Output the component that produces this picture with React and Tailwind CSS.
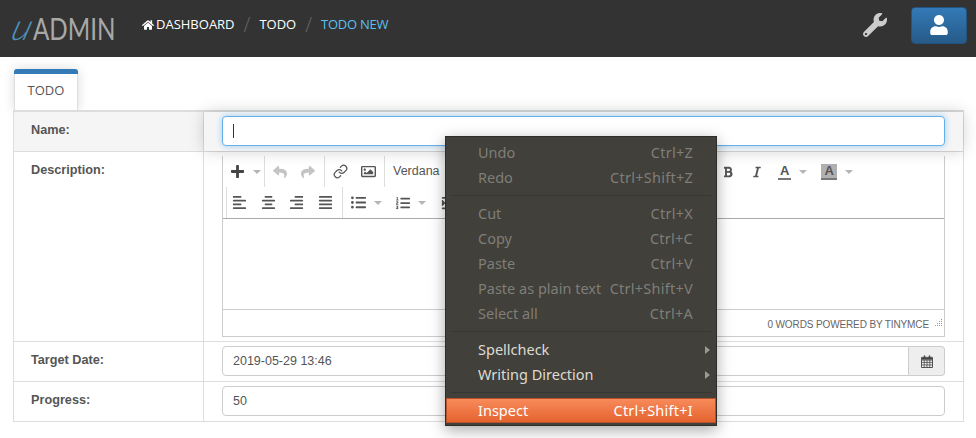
import React from "react";
import {
  FaHome,
  FaWrench,
  FaUser,
  FaPlus,
  FaReply,
  FaShare,
  FaRegImage,
  FaAlignLeft,
  FaAlignCenter,
  FaAlignRight,
  FaAlignJustify,
  FaListUl,
  FaListOl,
  FaIndent,
  FaBold,
  FaItalic,
} from "react-icons/fa";
import { Link } from "lucide-react";

const menuItems = [
  { label: "Undo", keys: "Ctrl+Z" },
  { label: "Redo", keys: "Ctrl+Shift+Z" },
  { sep: true },
  { label: "Cut", keys: "Ctrl+X" },
  { label: "Copy", keys: "Ctrl+C" },
  { label: "Paste", keys: "Ctrl+V" },
  { label: "Paste as plain text", keys: "Ctrl+Shift+V" },
  { label: "Select all", keys: "Ctrl+A" },
  { sep: true },
  { label: "Spellcheck", sub: true, enabled: true },
  { label: "Writing Direction", sub: true, enabled: true },
  { sep: true },
  { label: "Inspect", keys: "Ctrl+Shift+I", active: true },
];

function Caret() {
  return <span className="ml-[8px] h-0 w-0 border-x-[4px] border-t-[4px] border-x-transparent border-t-[#b5b5b5]" />;
}

function Row({ label, children, className = "" }) {
  return (
    <div className={`grid grid-cols-[190px_1fr] border-b border-[#ddd] ${className}`}>
      <div className="border-r border-[#ddd] pl-[17px] pt-[9px] text-[12.7px] font-bold text-[#555]">{label}</div>
      {children}
    </div>
  );
}

function CalendarIcon() {
  return (
    <svg width="12" height="13" viewBox="0 0 13 14" className="text-[#444]">
      <path d="M0.5 2.5h12v11h-12z" fill="none" stroke="currentColor" />
      <path d="M0.5 5.5h12M0.5 8h12M0.5 10.7h12M3.5 5v8M6.5 5v8M9.5 5v8" fill="none" stroke="currentColor" strokeWidth="0.8" />
      <path d="M1 3h11v2H1z" fill="currentColor" />
      <path d="M3 0.5h1.6v3H3zM8.4 0.5H10v3H8.4z" fill="currentColor" />
    </svg>
  );
}

function ResizeGrip() {
  return (
    <svg width="9" height="9" viewBox="0 0 9 9" className="ml-[5px] mt-[8px] text-[#999]">
      <path d="M7 1h1v1H7zM5 3h1v1H5zM7 3h1v1H7zM3 5h1v1H3zM5 5h1v1H5zM7 5h1v1H7zM1 7h1v1H1zM3 7h1v1H3zM5 7h1v1H5zM7 7h1v1H7z" fill="currentColor" />
    </svg>
  );
}

function ContextMenu() {
  return (
    <div className="absolute left-[445px] top-[136px] z-20 h-[290px] w-[272px] border border-[#2e2d29] bg-[#41403b] pt-[3px] font-['Noto_Sans',sans-serif] text-[14.5px] shadow-[0_4px_14px_rgba(0,0,0,0.35)]">
      {menuItems.map((item, i) => {
        if (item.sep) {
          return (
            <div key={i} className="flex h-[11px] items-center px-[5px]">
              <div className="h-px w-full bg-[#373631]" />
            </div>
          );
        }
        const tone = item.active
          ? "border border-[#b5522a] bg-gradient-to-b from-[#f88a5a] to-[#e4632e] pl-[31px] pr-[22px] text-white"
          : item.enabled
            ? "pl-[32px] pr-[23px] text-[#dfdbd2]"
            : "pl-[32px] pr-[23px] text-[#7f7e78]";
        return (
          <div key={i} className={`flex h-[25px] items-center justify-between ${tone}`}>
            <span>{item.label}</span>
            {item.keys && <span className="tracking-[0.25px]">{item.keys}</span>}
            {item.sub && (
              <span className="-mr-[17px] h-0 w-0 border-y-[4px] border-l-[5px] border-y-transparent border-l-[#9a9993]" />
            )}
          </div>
        );
      })}
    </div>
  );
}

function Toolbar() {
  return (
    <div className="border-b border-[#aaa] text-[#555]">
      <div className="flex h-[31px] items-center">
        <div className="flex h-full w-[42px] items-center border-r border-[#ddd] pl-[7px]">
          <FaPlus size={15} className="text-[#444]" />
          <Caret />
        </div>
        <div className="flex h-full w-[60px] items-center gap-[14px] border-r border-[#ddd] pl-[8px] text-[#c4c4c4]">
          <FaReply size={14} />
          <FaShare size={14} />
        </div>
        <div className="flex h-full w-[60px] items-center gap-[13px] border-r border-[#ddd] pl-[8px]">
          <Link size={15} strokeWidth={2} />
          <FaRegImage size={15} />
        </div>
        <span className="ml-[8px] w-[329px] text-[12.5px]">Verdana</span>
        <FaBold size={12} />
        <FaItalic size={12} className="ml-[17px]" />
        <div className="ml-[15px] flex items-center">
          <span className="border-b-2 border-[#777] px-[2px] text-[13px] font-bold leading-[14px]">A</span>
          <Caret />
        </div>
        <div className="ml-[14px] flex items-center">
          <span className="border-b-2 border-[#777] bg-[#b0b0b0] px-[3px] text-[13px] font-bold leading-[14px]">A</span>
          <Caret />
        </div>
      </div>
      <div className="flex h-[31px] items-center pl-[3px]">
        <div className="flex h-full w-[117px] items-center gap-[13.7px] border-x border-[#ddd] pl-[5px]">
          <FaAlignLeft size={15} />
          <FaAlignCenter size={15} />
          <FaAlignRight size={15} />
          <FaAlignJustify size={15} />
        </div>
        <div className="flex h-full items-center pl-[8px]">
          <FaListUl size={15} />
          <Caret />
          <FaListOl size={14} className="ml-[14px]" />
          <Caret />
          <FaIndent size={14} className="ml-[15px]" />
        </div>
      </div>
    </div>
  );
}

export default function App() {
  return (
    <div className="relative h-[438px] w-[976px] overflow-hidden bg-white font-['Liberation_Sans',sans-serif]">
      {/* top bar */}
      <header className="flex h-[57px] items-center bg-[#333] pb-[7px] pl-[11px] pr-[9px]">
        <div className="flex w-[131px] items-baseline font-['Lato',sans-serif] leading-none text-[#a8a8a8]">
          <span className="w-[22px] -skew-x-[18deg] pl-[3px] text-[37px] font-light italic text-[#4b93bd]">u</span>
          <span className="origin-left scale-x-[0.78] text-[31px]">ADMIN</span>
        </div>
        <nav className="flex items-center font-['Open_Sans',sans-serif] text-[13px] text-white">
          <FaHome size={12} className="mr-[2px]" />
          <span>DASHBOARD</span>
          <span className="mx-[9px] text-[20px] font-light text-[#666]">/</span>
          <span>TODO</span>
          <span className="mx-[9px] text-[20px] font-light text-[#666]">/</span>
          <span className="tracking-[-0.25px] text-[#5bc0f0]">TODO NEW</span>
        </nav>
        <FaWrench size={24} className="ml-auto mr-[24px] text-[#ccc]" />
        <button className="flex h-[37px] w-[56px] items-center justify-center rounded-[4px] border border-[#245580] bg-gradient-to-b from-[#337ab7] to-[#265a88] text-white">
          <FaUser size={20} />
        </button>
      </header>

      <main className="pl-[13px] pr-[12px] pt-[12px]">
        {/* tab */}
        <div className="relative z-[1] ml-px w-[64px] rounded-t-[3px] border-t-[5px] border-[#337ab7] bg-white shadow-[0_0_12px_rgba(0,0,0,0.15)]">
          <div className="flex h-[36px] items-center justify-center border-x border-[#ddd] pb-[2px] font-['Open_Sans',sans-serif] text-[13px] text-[#555]">
            TODO
          </div>
        </div>

        <div className="relative z-[2] border-x border-t-2 border-[#ddd]">
          <Row label="Name:" className="h-[40px] bg-[#f5f5f5]">
            <div className="relative z-10 bg-[#f5f5f5] pb-[5px] pl-[18px] pr-[18px] pt-[4px] shadow-[0_0_16px_rgba(0,0,0,0.18)]">
              <div className="flex h-[30px] items-center rounded-[4px] border border-[#66afe9] bg-white pl-[10px] shadow-[0_0_6px_rgba(102,175,233,0.6)]">
                <span className="h-[14px] w-px bg-[#333]" />
              </div>
            </div>
          </Row>

          <Row label="Description:" className="h-[190px]">
            <div className="pl-[18px] pr-[18px] pt-[4px]">
              <div className="h-[181px] border-x border-b border-[#ccc] bg-white">
                <Toolbar />
                <div className="h-[91px] border-b border-[#ccc]" />
                <div className="flex h-[26px] items-start justify-end pr-[1px]">
                  <span className="mt-[7px] text-[10px] tracking-[-0.12px] text-[#666]">0 WORDS POWERED BY TINYMCE</span>
                  <ResizeGrip />
                </div>
              </div>
            </div>
          </Row>

          <Row label="Target Date:" className="h-[40px]">
            <div className="flex items-start pl-[18px] pr-[18px] pt-[4px]">
              <div className="flex h-[30px] flex-1 items-center rounded-l-[4px] border border-[#ccc] pl-[10px] text-[12.5px] text-[#555]">
                2019-05-29 13:46
              </div>
              <div className="flex h-[30px] w-[36px] items-center justify-center rounded-r-[4px] border border-l-0 border-[#ccc] bg-[#eee]">
                <CalendarIcon />
              </div>
            </div>
          </Row>

          <Row label="Progress:" className="h-[40px]">
            <div className="flex items-start pl-[18px] pr-[18px] pt-[4px]">
              <div className="flex h-[30px] flex-1 items-center rounded-[4px] border border-[#ccc] pl-[10px] text-[12.5px] text-[#555]">
                50
              </div>
            </div>
          </Row>
        </div>
      </main>

      <ContextMenu />
    </div>
  );
}
